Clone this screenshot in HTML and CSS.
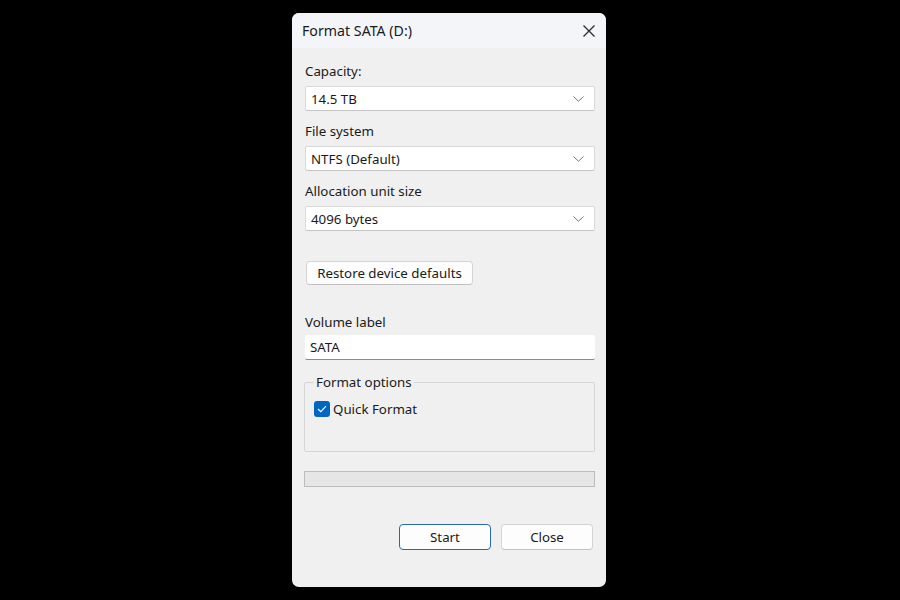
FILE: index.html
```html
<!DOCTYPE html>
<html>
<head>
<meta charset="utf-8">
<link rel="stylesheet" href="styles.css">
</head>
<body>
<div class="window">
  <div class="titlebar">
    <span class="title">Format SATA (D:)</span>
    <svg class="close" width="14" height="14" viewBox="0 0 14 14"><path d="M1.5 1.5 L12.5 12.5 M12.5 1.5 L1.5 12.5" stroke="#2b2b2b" stroke-width="1.3" fill="none"/></svg>
  </div>
  <div class="content">
    <div class="label">Capacity:</div>
    <div class="select"><span>14.5 TB</span><svg class="chev" width="11" height="6" viewBox="0 0 11 6"><path d="M0.5 0.5 L5.5 5.2 L10.5 0.5" stroke="#777" stroke-width="1" fill="none"/></svg></div>
    <div class="label gap">File system</div>
    <div class="select"><span>NTFS (Default)</span><svg class="chev" width="11" height="6" viewBox="0 0 11 6"><path d="M0.5 0.5 L5.5 5.2 L10.5 0.5" stroke="#777" stroke-width="1" fill="none"/></svg></div>
    <div class="label gap">Allocation unit size</div>
    <div class="select"><span>4096 bytes</span><svg class="chev" width="11" height="6" viewBox="0 0 11 6"><path d="M0.5 0.5 L5.5 5.2 L10.5 0.5" stroke="#777" stroke-width="1" fill="none"/></svg></div>
    <button class="btn restore">Restore device defaults</button>
    <div class="label vol">Volume label</div>
    <div class="input">SATA</div>
    <fieldset class="group">
      <legend>Format options</legend>
      <label class="check"><span class="box"><svg width="10" height="8" viewBox="0 0 10 8"><path d="M1 4 L3.8 6.6 L9 1.2" stroke="#fff" stroke-width="1.2" fill="none"/></svg></span>Quick Format</label>
    </fieldset>
    <div class="progress"></div>
    <div class="actions">
      <button class="btn primary">Start</button>
      <button class="btn">Close</button>
    </div>
  </div>
</div>
</body>
</html>
```
FILE: styles.css
```css
html, body {
  margin: 0;
  padding: 0;
  background: #000;
  height: 100%;
}
body {
  display: flex;
  justify-content: center;
  font-family: "Noto Sans", "Segoe UI", sans-serif;
  font-size: 13.3px;
  color: #1a1a1a;
}
.window {
  margin-top: 13px;
  margin-left: -2px;
  width: 314px;
  height: 574px;
  background: #f0f0f0;
  border-radius: 7px;
  overflow: hidden;
  box-sizing: border-box;
}
.titlebar {
  height: 35px;
  background: #f4f5f8;
  display: flex;
  align-items: center;
  justify-content: space-between;
  padding: 0 10px 0 10px;
}
.title {
  font-size: 14.2px;
  color: #1b1b1b;
}
.content {
  padding: 14px 11px 0 13px;
  display: flex;
  flex-direction: column;
}
.label {
  height: 18px;
  line-height: 18px;
  margin-bottom: 6px;
}
.label.gap {
  margin-top: 11px;
}
.select, .input {
  height: 25px;
  box-sizing: border-box;
  background: #fff;
  border: 1px solid #d9d9d9;
  border-bottom-color: #c4c4c4;
  display: flex;
  align-items: center;
  justify-content: space-between;
  padding: 0 10px 0 5px;
  border-radius: 2px;
}
.chev {
  margin-top: 1px;
}
.btn {
  font-family: inherit;
  font-size: 13.3px;
  color: #1a1a1a;
  background: #fdfdfd;
  border: 1px solid #d4d4d4;
  border-bottom-color: #c2c2c2;
  border-radius: 4px;
  height: 25px;
  padding: 0;
}
.restore {
  align-self: flex-start;
  width: 167px;
  margin-left: 1px;
  margin-top: 30px;
  height: 24px;
}
.label.vol {
  margin-top: 28px;
  margin-bottom: 4px;
}
.input {
  border: none;
  border-bottom: 1px solid #8a8a8a;
  border-radius: 2px;
}
.group {
  margin: 13px 0 0 -1px;
  padding: 0 0 0 9px;
  border: 1px solid #d5d5d5;
  border-radius: 2px;
  height: 79px;
  box-sizing: border-box;
}
.group legend {
  padding: 0 2px;
  margin-left: 0;
  line-height: 18px;
}
.check {
  display: flex;
  align-items: center;
  margin-top: 9px;
}
.box {
  width: 16px;
  height: 16px;
  box-sizing: border-box;
  background: #0067c0;
  border-radius: 3px;
  display: flex;
  align-items: center;
  justify-content: center;
  margin-right: 3px;
}
.progress {
  margin: 19px 0 0 -1px;
  height: 16px;
  box-sizing: border-box;
  background: #e6e6e6;
  border: 1px solid #bcbcbc;
}
.actions {
  display: flex;
  justify-content: flex-end;
  gap: 10px;
  margin-top: 37px;
  padding-right: 2px;
}
.actions .btn {
  width: 92px;
  height: 26px;
}
.btn.primary {
  border: 1px solid #2a69b0;
}
```
